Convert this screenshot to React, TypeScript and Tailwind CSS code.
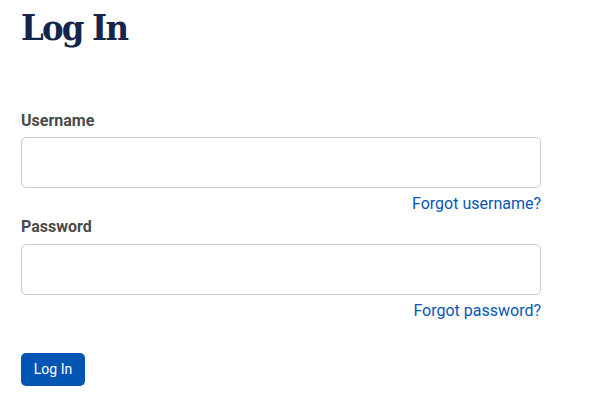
import React from 'react'

const App = () => {
  return (
    <div className="min-h-screen bg-white px-[21px] font-['Roboto',sans-serif]">
      {/* Heading */}
      <h1 className="pt-[4px] text-[36px] leading-[46px] font-bold text-[#15244a] font-['DejaVu_Serif',serif] [font-stretch:condensed] tracking-[-1.8px]">
        Log In
      </h1>

      <form className="mt-[61px] w-[520px]">
        {/* Username */}
        <label className="block text-[16px] leading-[19px] font-bold text-[#4a4a4a]">Username</label>
        <input
          type="text"
          className="mt-[7px] block h-[51px] w-full rounded-[5px] border border-[#cccccc] bg-white px-3 outline-none"
        />
        <div className="mt-[4px] text-right">
          <a href="#" className="text-[16px] leading-[19px] text-[#0857b6]">Forgot username?</a>
        </div>

        {/* Password */}
        <label className="mt-[1px] block text-[16px] leading-[19px] font-bold text-[#4a4a4a]">Password</label>
        <input
          type="password"
          className="mt-[8px] block h-[51px] w-full rounded-[5px] border border-[#cccccc] bg-white px-3 outline-none"
        />
        <div className="mt-[4px] text-right">
          <a href="#" className="text-[16px] leading-[19px] text-[#0857b6]">Forgot password?</a>
        </div>

        <button
          type="button"
          className="mt-[30px] h-[33px] w-[64px] rounded-[5px] bg-[#0355b4] text-[14px] text-white"
        >
          Log In
        </button>
      </form>
    </div>
  )
}

export default App
